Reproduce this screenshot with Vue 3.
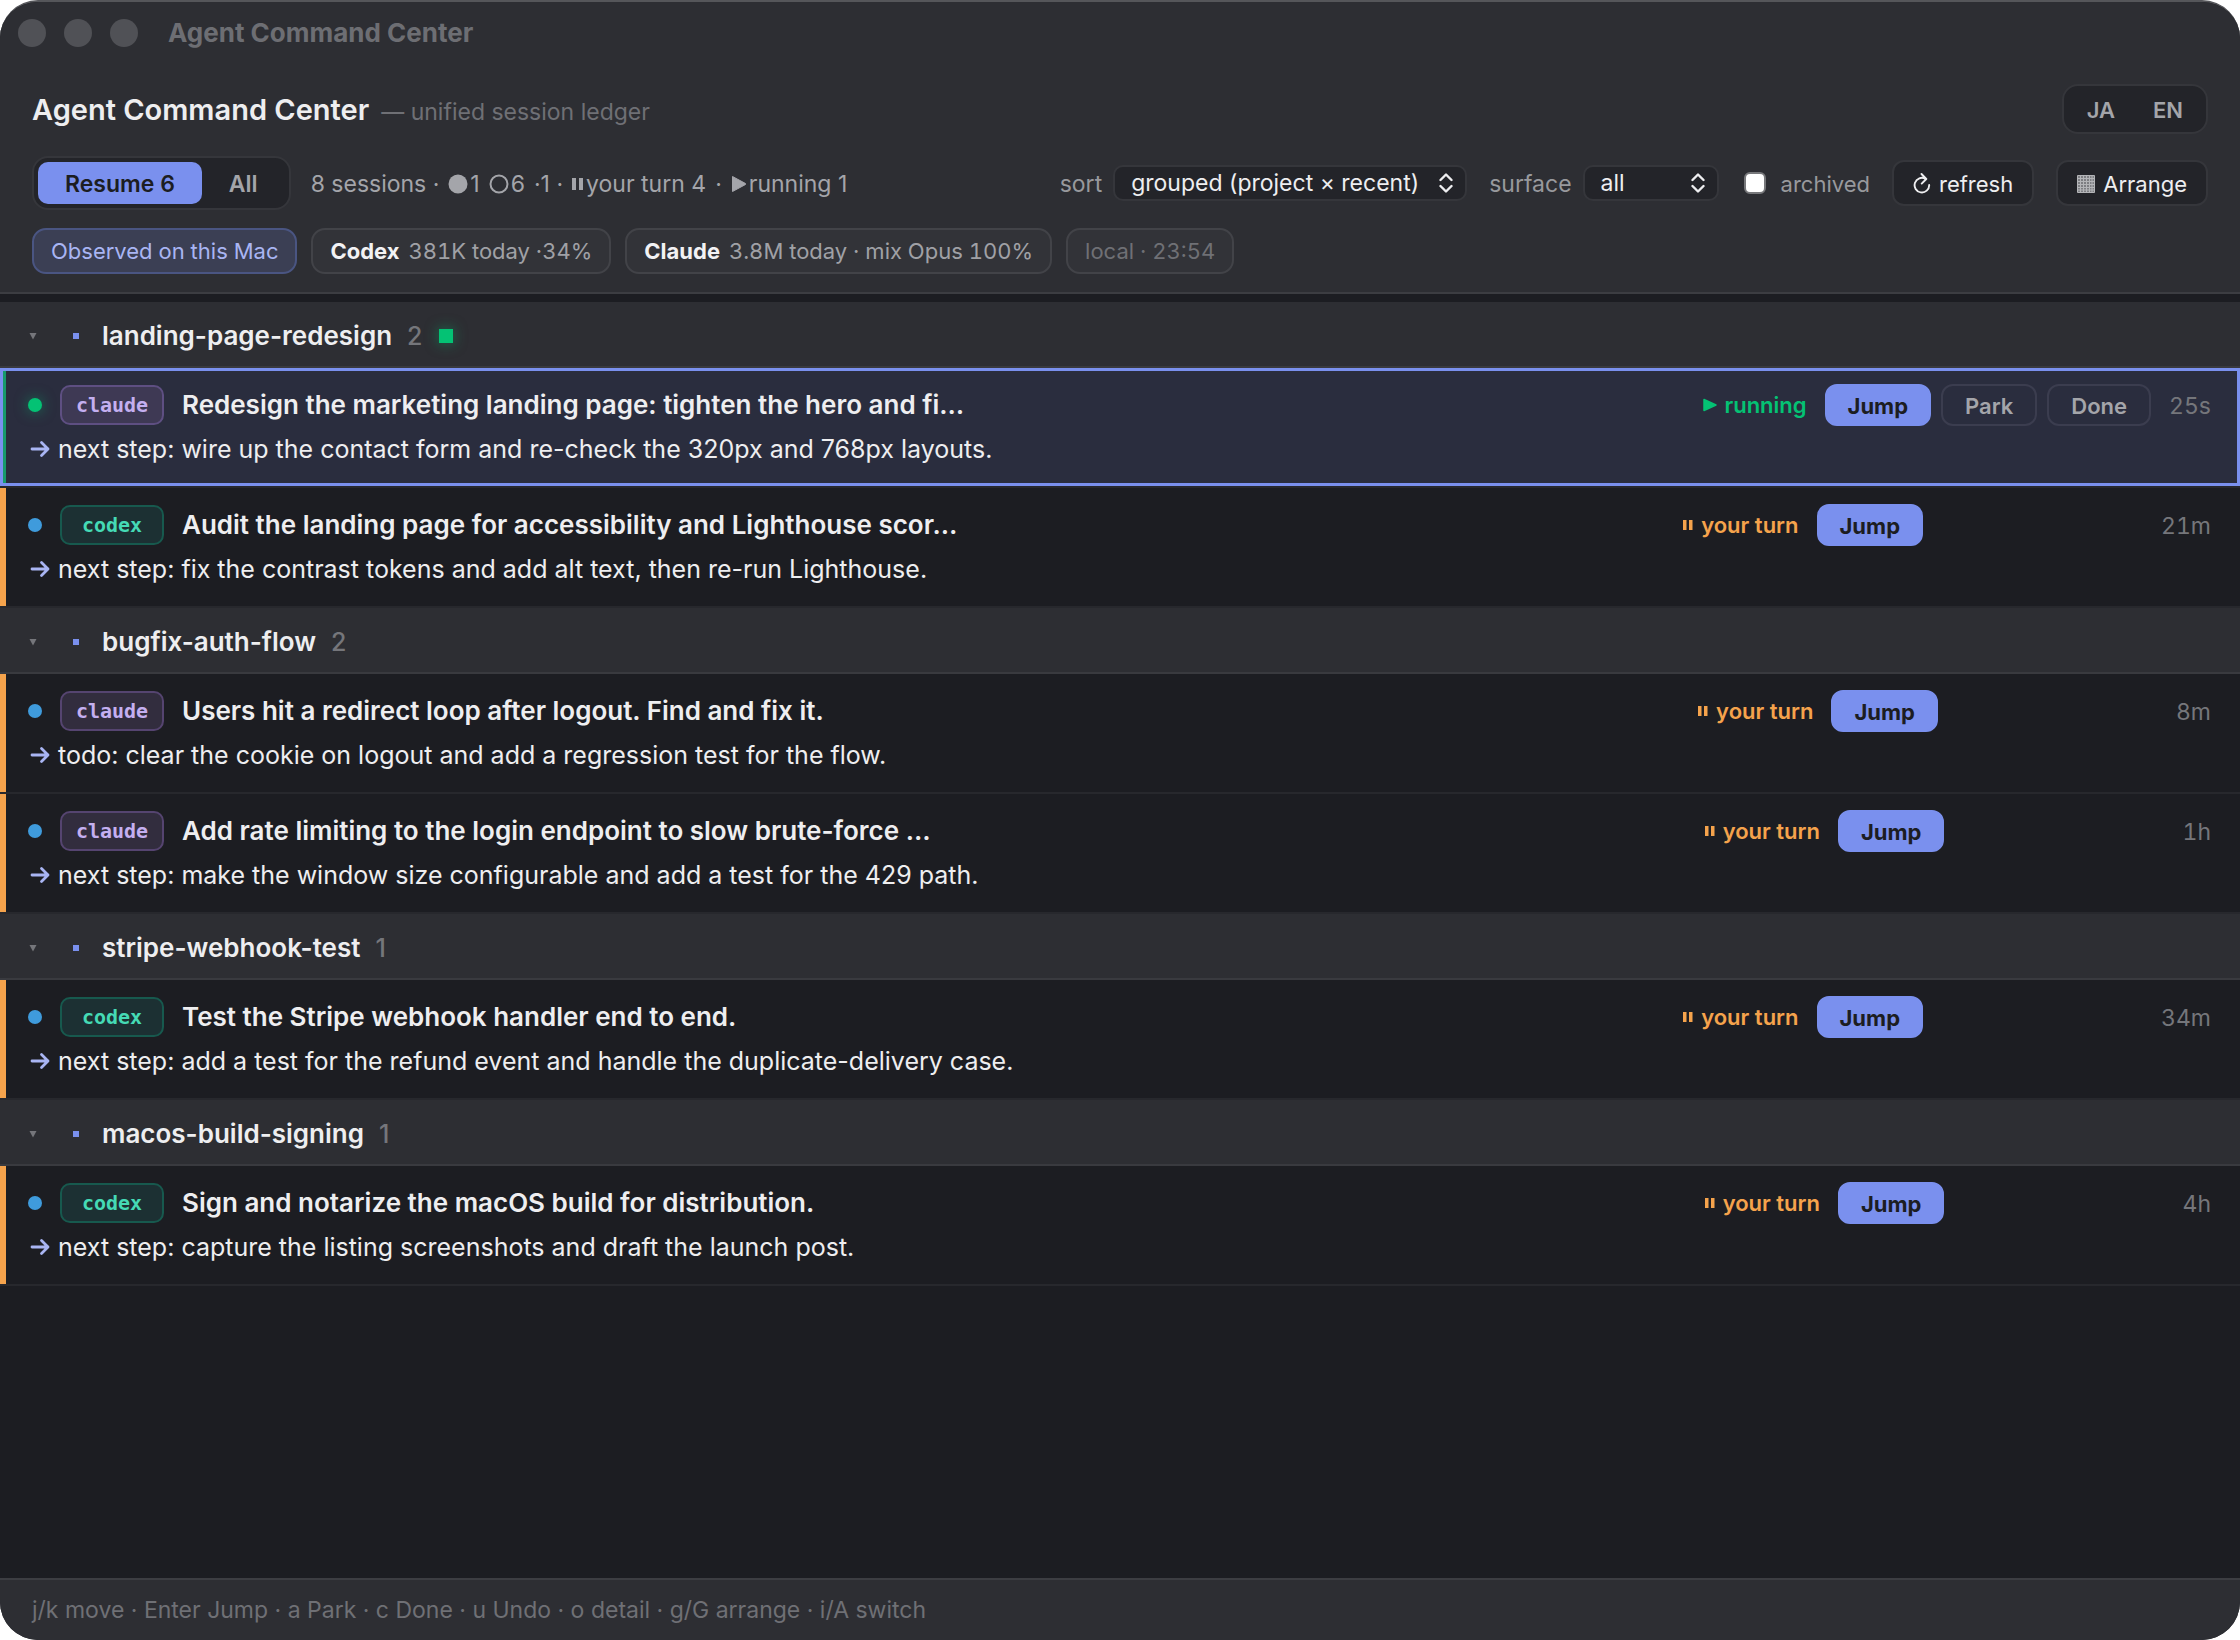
<script setup>
import { ref } from 'vue'

const tab = ref('resume')
const lang = ref('')
const sort = ref('grouped')
const surface = ref('all')
const archived = ref(false)

const groups = [
  {
    name: 'landing-page-redesign', live: true,
    sessions: [
      { agent: 'claude', state: 'running', selected: true, age: '25s', title: 'Redesign the marketing landing page: tighten the hero and fi…', next: 'next step: wire up the contact form and re-check the 320px and 768px layouts.' },
      { agent: 'codex', state: 'turn', age: '21m', title: 'Audit the landing page for accessibility and Lighthouse scor…', next: 'next step: fix the contrast tokens and add alt text, then re-run Lighthouse.' },
    ],
  },
  {
    name: 'bugfix-auth-flow',
    sessions: [
      { agent: 'claude', state: 'turn', age: '8m', title: 'Users hit a redirect loop after logout. Find and fix it.', next: 'todo: clear the cookie on logout and add a regression test for the flow.' },
      { agent: 'claude', state: 'turn', age: '1h', title: 'Add rate limiting to the login endpoint to slow brute-force …', next: 'next step: make the window size configurable and add a test for the 429 path.' },
    ],
  },
  {
    name: 'stripe-webhook-test',
    sessions: [
      { agent: 'codex', state: 'turn', age: '34m', title: 'Test the Stripe webhook handler end to end.', next: 'next step: add a test for the refund event and handle the duplicate-delivery case.' },
    ],
  },
  {
    name: 'macos-build-signing',
    sessions: [
      { agent: 'codex', state: 'turn', age: '4h', title: 'Sign and notarize the macOS build for distribution.', next: 'next step: capture the listing screenshots and draft the launch post.' },
    ],
  },
]
</script>

<template>
  <div class="window">
    <div class="titlebar">
      <i class="light"></i><i class="light"></i><i class="light"></i>
      <span class="window-title">Agent Command Center</span>
    </div>

    <header class="header">
      <div class="line brand">
        <h1>Agent Command Center</h1>
        <span class="subtitle">— unified session ledger</span>
        <div class="segmented lang">
          <button type="button" @click="lang = 'ja'">JA</button>
          <button type="button" @click="lang = 'en'">EN</button>
        </div>
      </div>

      <div class="line toolbar">
        <div class="segmented tabs">
          <button type="button" :class="{ on: tab === 'resume' }" @click="tab = 'resume'">Resume 6</button>
          <button type="button" :class="{ on: tab === 'all' }" @click="tab = 'all'">All</button>
        </div>
        <p class="stats">
          <span>8 sessions ·</span>
          <span class="stat"><svg width="20" height="20" viewBox="0 0 20 20"><circle cx="10" cy="10" r="9.5" fill="currentColor" /></svg>1</span>
          <span class="stat"><svg width="20" height="20" viewBox="0 0 20 20"><circle cx="10" cy="10" r="8.5" fill="none" stroke="currentColor" stroke-width="2" /></svg>6</span>
          <span>·1 ·</span>
          <span class="stat"><svg width="12" height="14" viewBox="0 0 12 14"><path d="M0 1h4v12H0zM7 1h4v12H7z" fill="currentColor" /></svg>your turn 4</span>
          <span>·</span>
          <span class="stat"><svg width="16" height="18" viewBox="0 0 16 18"><path d="M1.500 1.500 14.500 8.500v1L1.500 16.500z" fill="currentColor" stroke="currentColor" stroke-linejoin="round" /></svg>running 1</span>
        </p>
        <div class="controls">
          <div class="pick">
            <label for="sort">sort</label>
            <div class="select wide">
              <select id="sort" v-model="sort"><option value="grouped">grouped (project × recent)</option></select>
              <svg width="14" height="20" viewBox="0 0 14 20"><path d="m1.500 7L7 1.500 12.500 7M1.500 13 7 18.500 12.500 13" fill="none" stroke="currentColor" stroke-width="2.400" stroke-linecap="round" stroke-linejoin="round" /></svg>
            </div>
          </div>
          <div class="pick">
            <label for="surface">surface</label>
            <div class="select">
              <select id="surface" v-model="surface"><option value="all">all</option></select>
              <svg width="14" height="20" viewBox="0 0 14 20"><path d="m1.500 7L7 1.500 12.500 7M1.500 13 7 18.500 12.500 13" fill="none" stroke="currentColor" stroke-width="2.400" stroke-linecap="round" stroke-linejoin="round" /></svg>
            </div>
          </div>
          <label class="check"><input type="checkbox" v-model="archived" /><span>archived</span></label>
          <button type="button" class="tool">
            <svg width="18" height="24" viewBox="0 0 18 24"><path d="M12.500 6.800A7.300 7.300 0 1 0 16.200 13M8.500 2l4.800 5-4.600 4.600" fill="none" stroke="currentColor" stroke-width="1.900" stroke-linecap="round" stroke-linejoin="round" /></svg>
            refresh
          </button>
          <button type="button" class="tool">
            <svg width="18" height="18" viewBox="0 0 18 18"><path d="M.5.5h17v17H.5zM3.500 0v18M6.500 0v18M9.500 0v18M12.500 0v18M15 0v18M0 3.500h18M0 6.500h18M0 9.500h18M0 12.500h18M0 15h18" fill="#7d7e82" stroke="#b4b5b8" /></svg>
            Arrange
          </button>
        </div>
      </div>

      <div class="line chips">
        <span class="chip source">Observed on this Mac</span>
        <span class="chip"><b>Codex</b> 381K today ·34%</span>
        <span class="chip"><b>Claude</b> 3.8M today · mix Opus 100%</span>
        <span class="chip faint">local · 23:54</span>
      </div>
    </header>

    <main class="ledger">
      <section v-for="g in groups" :key="g.name" class="group">
        <div class="group-head">
          <svg class="caret" width="8" height="8" viewBox="0 0 8 8"><path d="M.5 1h7L4 7.500z" fill="currentColor" /></svg>
          <i class="pip"></i>
          <h2>{{ g.name }}</h2>
          <span class="count">{{ g.sessions.length }}</span>
          <i v-if="g.live" class="live"></i>
        </div>
        <article v-for="s in g.sessions" :key="s.title" class="row" :class="[s.state, { selected: s.selected }]">
          <div class="top">
            <i class="dot"></i>
            <span class="badge" :class="s.agent">{{ s.agent }}</span>
            <h3 class="title">{{ s.title }}</h3>
            <span class="state">
              <svg v-if="s.state === 'running'" width="14" height="14" viewBox="0 0 14 14"><path d="M1 1.500 13 7 1 12.500z" fill="currentColor" stroke="currentColor" stroke-width="1.500" stroke-linejoin="round" /></svg>
              <svg v-else width="12" height="12" viewBox="0 0 12 12"><path d="M1 1h3.500v10H1zM7 1h3.500v10H7z" fill="currentColor" /></svg>
              <span>{{ s.state === 'running' ? 'running' : 'your turn' }}</span>
            </span>
            <div class="actions">
              <button type="button" class="jump">Jump</button>
              <button type="button" class="quiet">Park</button>
              <button type="button" class="quiet">Done</button>
            </div>
            <span class="age">{{ s.age }}</span>
          </div>
          <p class="next">
            <svg width="20" height="18" viewBox="0 0 20 18"><path d="M2 9h16M11.500 2.500 18 9l-6.500 6.500" fill="none" stroke="currentColor" stroke-width="2.800" stroke-linecap="round" stroke-linejoin="round" /></svg>
            <span>{{ s.next }}</span>
          </p>
        </article>
      </section>
    </main>

    <footer class="hints">j/k move · Enter Jump · a Park · c Done · u Undo · o detail · g/G arrange · i/A switch</footer>
  </div>
</template>

<style>
body { background: #fff; }
</style>

<style scoped>
* { box-sizing: border-box; }
h1, h2, h3, p { margin: 0; }
svg { display: block; flex: none; }
button, select { font: inherit; color: inherit; margin: 0; cursor: pointer; }

.window {
  display: flex;
  flex-direction: column;
  min-height: 100vh;
  overflow: hidden;
  border-radius: 38px;
  border-top: 2px solid #55565a;
  background: #1c1d22;
  color: #eeeef0;
  font-family: Inter, "Liberation Sans", sans-serif;
  font-size: 23px;
  line-height: 30px;
}

.titlebar {
  display: flex;
  align-items: center;
  gap: 18px;
  height: 62px;
  padding: 0 18px;
  background: #2d2e33;
}
.light { width: 28px; height: 28px; border-radius: 50%; background: #505156; }
.window-title { margin-left: 12px; font-size: 26px; font-weight: 700; color: #6d6e73; }

.header {
  display: flex;
  flex-direction: column;
  padding: 20px 32px 18px;
  background: #2d2e33;
  border-bottom: 2px solid #3c3d42;
}
.line { display: flex; align-items: center; }
.brand { align-items: baseline; height: 50px; gap: 12px; }
h1 { font-size: 29px; font-weight: 600; line-height: 52px; }
.subtitle { color: #6f7075; }

.segmented {
  display: flex;
  padding: 4px;
  border: 2px solid #35363b;
  border-radius: 16px;
  background: #232429;
}
.segmented button {
  border: 0;
  border-radius: 10px;
  background: none;
  color: #a4a5aa;
  font-weight: 600;
}
.segmented .on { background: #7a90ee; color: #1c1d22; }
.lang { align-self: center; margin-left: auto; height: 50px; }
.lang button { padding: 2px 19px 0; font-size: 22px; }
.tabs { height: 54px; }
.tabs button { padding: 2px 27px 0; }

.toolbar { margin-top: 22px; gap: 20px; }
.stats { display: flex; align-items: center; gap: 9px; padding-top: 2px; color: #a4a5aa; }
.stat { display: flex; align-items: center; gap: 2px; }
.controls { display: flex; align-items: center; gap: 22px; margin-left: auto; font-size: 22px; }
.pick { display: flex; align-items: center; gap: 11px; color: #98999d; font-size: 23px; }
.pick label { padding-top: 2px; }
.select {
  display: grid;
  grid-template-columns: minmax(0, 1fr) 28px;
  align-items: center;
  width: 136px;
  height: 36px;
  color: #eeeef0;
}
.wide { width: 354px; }
.select select {
  grid-area: 1 / 1 / 2 / 3;
  width: 100%;
  height: 36px;
  padding: 0 16px;
  appearance: none;
  border: 2px solid #35363b;
  border-radius: 10px;
  background: #232429;
}
.select svg { grid-area: 1 / 2; pointer-events: none; }
.check { display: flex; align-items: center; gap: 15px; color: #98999d; }
.check span { padding-top: 2px; }
.check input {
  appearance: none;
  width: 22px;
  height: 22px;
  margin: 0 0 0 3px;
  border: 2px solid #77787b;
  border-radius: 6px;
  background: #fff;
}
.tool {
  display: flex;
  align-items: center;
  gap: 8px;
  height: 46px;
  padding: 2px 19px 0;
  border: 2px solid #35363b;
  border-radius: 12px;
  background: #232429;
}

.chips { margin-top: 18px; gap: 14px; }
.chip {
  height: 46px;
  padding: 0 17px;
  border: 2px solid #424348;
  border-radius: 14px;
  background: #323338;
  color: #a0a1a6;
  font-size: 22px;
  font-variant-numeric: tabular-nums;
  line-height: 43px;
}
.chip b { margin-right: 3px; color: #f2f2f4; font-weight: 700; }
.source { border-color: #4a5582; background: #3b3f54; color: #a9b5f3; }
.faint { color: #6f7075; }

.ledger { flex: 1; padding-top: 8px; }
.group-head {
  display: flex;
  align-items: center;
  height: 66px;
  padding: 3px 29px 0;
  border-bottom: 2px solid #393a3f;
  background: #2d2e33;
}
.caret { color: #75767b; }
.pip { width: 6px; height: 6px; margin: 0 23px 0 36px; background: #7a90ee; }
h2 { font-size: 26px; font-weight: 600; }
.count { margin-left: 15px; color: #75767b; font-size: 25px; font-weight: 500; }
.live { width: 14px; height: 14px; margin-left: 17px; background: #04c274; box-shadow: 0 0 14px #04c27480; }

.row {
  position: relative;
  height: 120px;
  padding: 14px 29px 0 28px;
  border-bottom: 2px solid #27282d;
  box-shadow: inset 6px 0 #f5a34c;
}
.row.running { box-shadow: inset 6px 0 #169a6c; }
.row.selected { background: #2a2d3e; }
.row.selected::after {
  content: "";
  position: absolute;
  inset: 0;
  border: 3px solid #7a90ee;
  pointer-events: none;
}
.top { display: flex; align-items: center; height: 46px; }
.dot { width: 14px; height: 14px; border-radius: 50%; background: #3f9bdc; }
.running .dot { background: #04c274; box-shadow: 0 0 14px #04c27480; }
.badge {
  width: 104px;
  height: 40px;
  margin: 0 18px;
  border: 2px solid;
  border-radius: 10px;
  font-family: "DejaVu Sans Mono", monospace;
  font-size: 20px;
  font-weight: 700;
  line-height: 36px;
  text-align: center;
}
.claude { border-color: #554470; background: #322d3e; color: #c4aff0; }
.selected .claude { border-color: #5e4f82; background: #3e3954; }
.codex { border-color: #17594e; background: #1c3033; color: #45dab5; }
.title { font-size: 26px; font-weight: 600; white-space: nowrap; }
.state { display: flex; align-items: center; gap: 7px; margin-left: auto; color: #f5a34c; font-size: 22px; font-weight: 600; }
.running .state { color: #04c274; }
.actions { display: flex; gap: 10px; margin: 0 18px; }
.actions button { height: 42px; padding: 2px 22px 0; border: 2px solid #3b3d4f; border-radius: 12px; background: none; font-size: 22px; font-weight: 600; }
.actions .jump { padding: 2px 21px 0; border-color: #7a90ee; background: #7a90ee; color: #1c1d22; font-weight: 700; }
.actions .quiet { color: #a4a5aa; visibility: hidden; }
.selected .actions .quiet { visibility: visible; }
.age { padding-top: 2px; color: #75767b; font-variant-numeric: tabular-nums; }
.next { display: flex; align-items: center; gap: 8px; height: 42px; padding-left: 2px; font-size: 25px; }
.next svg { color: #a9b5f3; }

.hints {
  height: 62px;
  padding: 0 32px;
  border-top: 2px solid #3c3d42;
  background: #2d2e33;
  color: #6f7075;
  line-height: 61px;
}
</style>
